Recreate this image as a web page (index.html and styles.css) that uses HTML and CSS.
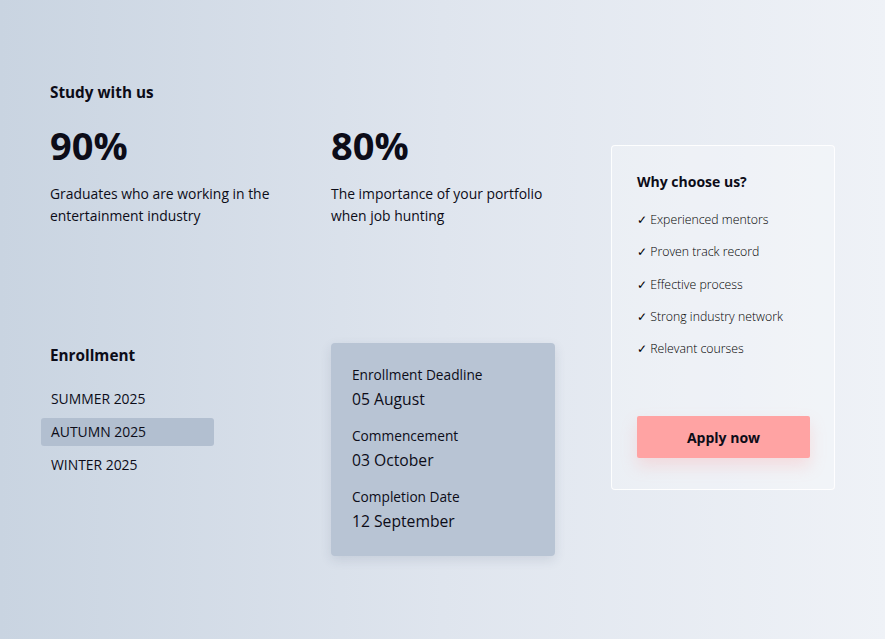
FILE: index.html
```html
<!DOCTYPE html>
<html lang="en">
<head>
<meta charset="utf-8">
<title>Study with us</title>
<link rel="stylesheet" href="styles.css">
</head>
<body>
<main class="page">
  <section class="left">
    <h2 class="title">Study with us</h2>
    <div class="stats">
      <div class="stat">
        <div class="stat-num">90%</div>
        <p class="stat-text">Graduates who are working in the entertainment industry</p>
      </div>
      <div class="stat">
        <div class="stat-num">80%</div>
        <p class="stat-text">The importance of your portfolio when job hunting</p>
      </div>
    </div>
    <div class="enroll">
      <div class="enroll-menu">
        <h2 class="title">Enrollment</h2>
        <ul class="terms">
          <li class="term">SUMMER 2025</li>
          <li class="term active">AUTUMN 2025</li>
          <li class="term">WINTER 2025</li>
        </ul>
      </div>
      <div class="dates">
        <div class="date">
          <div class="date-label">Enrollment Deadline</div>
          <div class="date-value">05 August</div>
        </div>
        <div class="date">
          <div class="date-label">Commencement</div>
          <div class="date-value">03 October</div>
        </div>
        <div class="date">
          <div class="date-label">Completion Date</div>
          <div class="date-value">12 September</div>
        </div>
      </div>
    </div>
  </section>
  <aside class="why">
    <h3 class="why-title">Why choose us?</h3>
    <ul class="why-list">
      <li>✓ Experienced mentors</li>
      <li>✓ Proven track record</li>
      <li>✓ Effective process</li>
      <li>✓ Strong industry network</li>
      <li>✓ Relevant courses</li>
    </ul>
    <button class="apply">Apply now</button>
  </aside>
</main>
</body>
</html>
```

FILE: styles.css
```css
* { box-sizing: border-box; }
html, body { margin: 0; padding: 0; }
body {
  width: 885px;
  height: 639px;
  overflow: hidden;
  background: linear-gradient(90deg, #c9d4e1 0%, #dfe5ee 50%, #eff2f7 100%);
  font-family: "Open Sans", "Noto Sans", sans-serif;
  color: #0c0c18;
}
.page {
  display: flex;
  gap: 57px;
  padding: 82px 50px 0 50px;
  align-items: flex-start;
}
.left {
  width: 504px;
  display: flex;
  flex-direction: column;
}
.title {
  margin: 0;
  font-size: 15.3px;
  font-weight: 700;
  line-height: 20px;
}
.stats {
  display: grid;
  grid-template-columns: 224px 224px;
  column-gap: 57px;
  margin-top: 20px;
}
.stat-num {
  font-size: 38px;
  font-weight: 700;
  line-height: 46px;
}
.stat-text {
  margin: 15px 0 0;
  font-size: 13.9px;
  line-height: 22px;
}
.enroll {
  display: grid;
  grid-template-columns: 224px 224px;
  column-gap: 57px;
  margin-top: 116px;
}
.enroll-menu { padding-top: 2px; }
.terms {
  list-style: none;
  margin: 20px 0 0 -9px;
  padding: 0;
  display: flex;
  flex-direction: column;
  gap: 5px;
}
.term {
  width: 173px;
  height: 28px;
  padding: 0 10px;
  font-size: 13.9px;
  line-height: 28px;
  font-weight: 400;
  border-radius: 3px;
}
.term.active { background: #b2bfd0; }
.dates {
  background: #b8c4d4;
  border-radius: 4px;
  padding: 22px 21px 23px;
  box-shadow: 0 4px 12px rgba(40, 60, 90, 0.12);
  display: flex;
  flex-direction: column;
  gap: 15px;
}
.date-label {
  font-size: 13.7px;
  line-height: 20px;
  font-weight: 400;
}
.date-value {
  font-size: 15.7px;
  line-height: 24px;
  margin-top: 2px;
}
.why {
  width: 224px;
  height: 345px;
  margin-top: 63px;
  border: 1px solid rgba(255, 255, 255, 0.9);
  border-radius: 4px;
  background: rgba(255, 255, 255, 0.25);
  padding: 26px 24px 31px 25px;
  display: flex;
  flex-direction: column;
}
.why-title {
  margin: 0;
  font-size: 14px;
  font-weight: 700;
  line-height: 20px;
}
.why-list {
  list-style: none;
  margin: 18px 0 0;
  padding: 0;
  display: flex;
  flex-direction: column;
  gap: 12.3px;
}
.why-list li {
  font-size: 12.3px;
  line-height: 20px;
  font-weight: 350;
  color: #000;
}
.apply {
  margin-top: auto;
  height: 42px;
  width: 100%;
  border: none;
  border-radius: 2px;
  background: #ffa3a3;
  font-family: inherit;
  font-size: 14px;
  font-weight: 700;
  color: #0c0c18;
  box-shadow: 0 8px 16px rgba(255, 150, 150, 0.25);
}
```
